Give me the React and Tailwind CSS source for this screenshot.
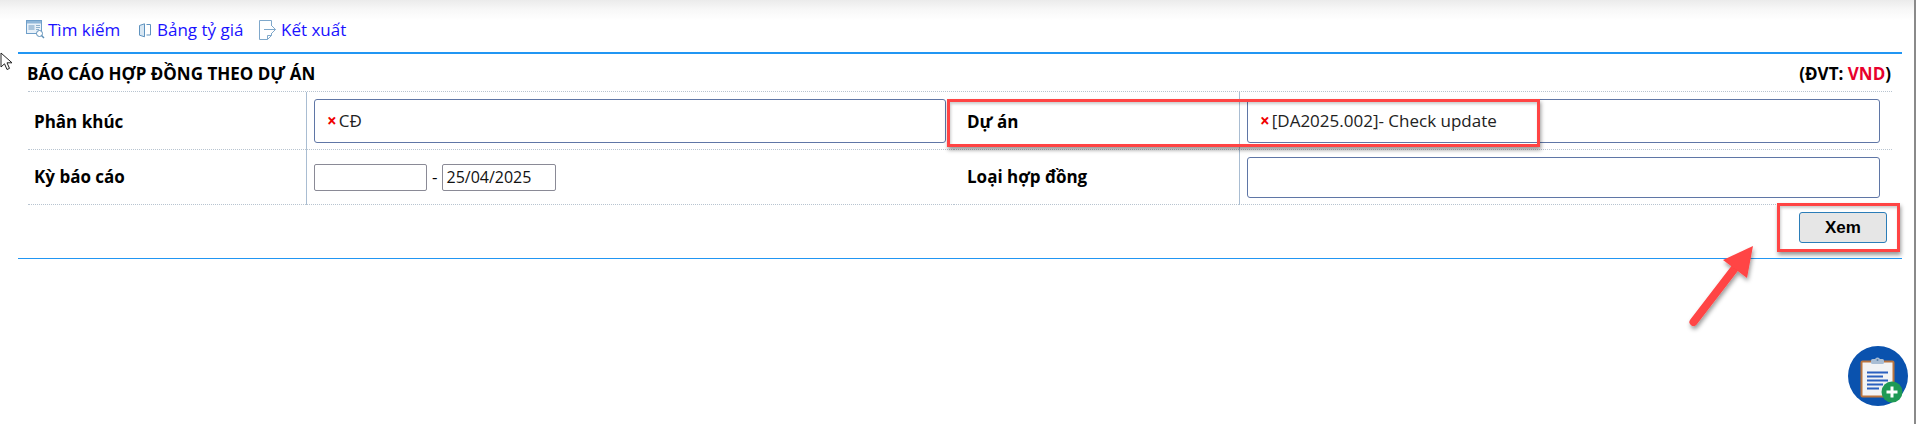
const font = { fontFamily: '"Open Sans", "Noto Sans", sans-serif' };

function SearchIcon() {
  return (
    <svg width="19" height="20" viewBox="0 0 19 20" fill="none" className="shrink-0">
      <rect x="0.5" y="0.5" width="15" height="13" fill="#e8f1f9" stroke="#6f9fc9" />
      <rect x="1" y="1" width="14" height="2.5" fill="#8fb6d8" />
      <rect x="2.5" y="5" width="6" height="5" fill="#a9c4dc" />
      <path d="M10 5.5h4M10 7.5h4M10 9.5h3" stroke="#8fb0cc" />
      <circle cx="13.5" cy="13.5" r="3" fill="#fff" stroke="#5d8fb8" />
      <path d="M15.5 15.5l2.5 2.5" stroke="#5d8fb8" strokeWidth="1.4" />
    </svg>
  );
}

function BookIcon() {
  return (
    <svg width="12" height="15" viewBox="0 0 12 15" fill="none" className="shrink-0">
      <path d="M0.5 2.5L5.5 0.8V13.8L0.5 12.2Z" fill="#d8e7f3" stroke="#5f93bf" />
      <path d="M7.5 1.5H11.5V12H7.5" stroke="#5f93bf" />
    </svg>
  );
}

function ExportIcon() {
  return (
    <svg width="18" height="20" viewBox="0 0 18 20" fill="none" className="shrink-0">
      <path d="M12.5 6V0.5H0.5V19.5H8.5L12.5 15.5V13" fill="#fff" stroke="#7fa8cb" />
      <path d="M8.5 19.5V15.5H12.5" stroke="#7fa8cb" />
      <path d="M5 9.5H16.5M13 6l3.5 3.5L13 13" stroke="#7fa8cb" />
    </svg>
  );
}

function Tag({ children }) {
  return (
    <span className="flex items-center text-[17px] text-[#222]">
      <span className="mr-[2px] text-[17px] font-bold leading-none text-[#f00000]">×</span>
      {children}
    </span>
  );
}

export default function App() {
  return (
    <div className="relative flex h-[424px] w-[1919px] overflow-hidden bg-white" style={font}>
      <main className="h-full w-[1914px]">
        <div className="flex h-[52px] items-end bg-[linear-gradient(to_bottom,#ebebeb_0px,#f8f8f8_10px,#ffffff_20px)] pb-[11px] pl-[26px] text-[17px] leading-[22px] text-[#1a12ff]">
          <a className="flex w-[113px] items-center gap-[3px]"><SearchIcon />Tìm kiếm</a>
          <a className="flex w-[120px] items-center gap-[6px]"><BookIcon />Bảng tỷ giá</a>
          <a className="flex items-center gap-[4px]"><ExportIcon />Kết xuất</a>
        </div>

        <section className="ml-[18px] h-[207px] w-[1884px] border-y border-t-2 border-[#2196f3] px-[10px]">
          <div className="flex h-[38px] items-center justify-between border-b border-dotted border-[#b8c4d0] pr-[1px] pt-[3px]">
            <h1 className="ml-[-1px] text-[17px] font-bold text-black">BÁO CÁO HỢP ĐỒNG THEO DỰ ÁN</h1>
            <span className="text-[17px] font-bold text-black">
              (ĐVT: <span className="text-[#e8002d]">VND</span>)
            </span>
          </div>

          <div className="grid grid-cols-[278px_648px_285px_653px] text-[17px] text-black">
            <div className="flex h-[58px] items-center border-b border-dotted border-[#b8c4d0] pl-[6px] pt-[2px] font-bold">Phân khúc</div>
            <div className="flex h-[58px] items-center border-b border-l border-b-[#b8c4d0] border-l-[#a9bdd2] [border-bottom-style:dotted] pl-[7px] pr-[8px]">
              <div className="flex h-[44px] w-full items-center rounded-[3px] border border-[#5f76a6] pl-[12px]">
                <Tag>CĐ</Tag>
              </div>
            </div>
            <div className="flex h-[58px] items-center border-b border-dotted border-[#b8c4d0] pl-[13px] pt-[2px] font-bold">Dự án</div>
            <div className="flex h-[58px] items-center border-b border-l border-b-[#b8c4d0] border-l-[#a9bdd2] [border-bottom-style:dotted] pl-[7px] pr-[12px]">
              <div className="flex h-[44px] w-full items-center rounded-[3px] border border-[#5f76a6] pl-[12px]">
                <Tag>[DA2025.002]- Check update</Tag>
              </div>
            </div>

            <div className="flex h-[55px] items-center border-b border-dotted border-[#b8c4d0] pl-[6px] font-bold">Kỳ báo cáo</div>
            <div className="flex h-[55px] items-center border-b border-l border-b-[#b8c4d0] border-l-[#a9bdd2] [border-bottom-style:dotted] pl-[7px]">
              <div className="h-[27px] w-[113px] rounded-[2px] border border-[#8a8a96]" />
              <span className="mx-[5px]">-</span>
              <div className="flex h-[27px] w-[114px] items-center rounded-[2px] border border-[#8a8a96] pl-[3px] text-[16px] text-[#111]">25/04/2025</div>
            </div>
            <div className="flex h-[55px] items-center border-b border-dotted border-[#b8c4d0] pl-[13px] font-bold">Loại hợp đồng</div>
            <div className="flex h-[55px] items-center border-b border-l border-b-[#b8c4d0] border-l-[#a9bdd2] [border-bottom-style:dotted] pl-[7px] pr-[12px]">
              <div className="h-[41px] w-full rounded-[3px] border border-[#5f76a6]" />
            </div>
          </div>

          <div className="mr-[5px] flex justify-end pt-[7px]">
            <button
              className="h-[31px] w-[88px] rounded-[3px] border border-[#2b7db8] bg-[#e6e6e6] text-[17px] font-bold text-black"
              style={{ fontFamily: '"Liberation Sans", Arial, sans-serif' }}
            >
              Xem
            </button>
          </div>
        </section>
      </main>
      <div className="h-full w-[2px] bg-[#8a8a8a]" />

      {/* mouse cursor captured in the screenshot */}
      <svg className="absolute left-0 top-[52px]" width="14" height="19" viewBox="0 0 14 19" fill="none">
        <path d="M1 1V15L4.5 11.8L7 17.5L9.5 16.4L7 10.8H12Z" fill="#fff" stroke="#222" strokeWidth="1" />
      </svg>

      {/* annotation rectangles */}
      <div className="absolute left-[947px] top-[99px] h-[48px] w-[593px] border-[3px] border-[#ff4444] shadow-[1px_3px_4px_rgba(0,0,0,0.4),inset_1px_2px_3px_rgba(0,0,0,0.2)]" />
      <div className="absolute left-[1777px] top-[203px] h-[49px] w-[123px] border-[3px] border-[#ff4444] shadow-[1px_3px_4px_rgba(0,0,0,0.4),inset_1px_2px_3px_rgba(0,0,0,0.2)]" />

      {/* annotation arrow */}
      <svg className="absolute left-[1680px] top-[236px]" width="90" height="100" viewBox="1680 236 90 100" fill="none">
        <defs>
          <filter id="arrowShadow" x="-20%" y="-20%" width="150%" height="150%">
            <feDropShadow dx="1" dy="3" stdDeviation="2" floodColor="#000" floodOpacity="0.4" />
          </filter>
        </defs>
        <g filter="url(#arrowShadow)">
          <path d="M1693.5 322L1735 268" stroke="#ff4444" strokeWidth="8" strokeLinecap="round" />
          <path d="M1723 260L1753 246L1747 278Z" fill="#ff4444" />
        </g>
      </svg>

      {/* floating action button */}
      <button className="absolute left-[1848px] top-[346px] flex h-[60px] w-[60px] items-center justify-center rounded-full bg-[#0a52ae]">
        <svg width="60" height="60" viewBox="0 0 60 60" fill="none">
          <rect x="13.5" y="15.5" width="32" height="35" rx="1" fill="#f2f3f5" stroke="#b9743f" strokeWidth="2" />
          <rect x="23" y="13" width="13" height="5" rx="1.5" fill="#a9bdd4" />
          <circle cx="29.5" cy="14" r="2.5" fill="#a9bdd4" />
          <circle cx="29.5" cy="14" r="1" fill="#5b7fa8" />
          <path d="M19 26.5H40M19 30.5H35M19 34.5H40M19 38.5H35M19 42.5H31" stroke="#2a5fbf" strokeWidth="2" />
          <circle cx="44" cy="46" r="10.5" fill="#1f9a55" />
          <path d="M44 40.5V51.5M38.5 46H49.5" stroke="#fff" strokeWidth="3" />
        </svg>
      </button>
    </div>
  );
}
